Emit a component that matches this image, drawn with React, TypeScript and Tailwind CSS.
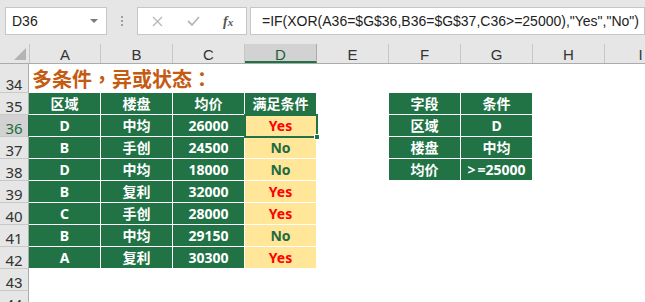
import React from "react";

const COLS = ["A", "B", "C", "D", "E", "F", "G", "H", "I"];

type Row = { region: string; building: string; price: string; ok: boolean };

const rows: Row[] = [
  { region: "D", building: "中均", price: "26000", ok: true },
  { region: "B", building: "手创", price: "24500", ok: false },
  { region: "D", building: "中均", price: "18000", ok: false },
  { region: "B", building: "复利", price: "32000", ok: true },
  { region: "C", building: "手创", price: "28000", ok: true },
  { region: "B", building: "中均", price: "29150", ok: false },
  { region: "A", building: "复利", price: "30300", ok: true },
];

// F35:G38 lookup table
const criteria: string[][] = [
  ["字段", "条件"],
  ["区域", "D"],
  ["楼盘", "中均"],
  ["均价", ">=25000"],
];

const cellFont = { fontFamily: '"Noto Sans", "Noto Sans CJK SC", sans-serif' };

function RowHeader({ n, tall, active }: { n: number; tall?: boolean; active?: boolean }) {
  return (
    <div
      className={`w-[29px] shrink-0 flex items-end justify-center border-b border-r text-[15px] leading-[13px] ${
        tall ? "h-[29px]" : "h-[22px]"
      } ${active ? "bg-[#d2d2d2] text-[#1d6a40] border-r-[#217346] border-b-[#c8c8c8]" : "bg-[#e6e6e6] text-[#333] border-b-[#c8c8c8] border-r-[#ababab]"}`}
    >
      <span className="pb-[1px]">{n}</span>
    </div>
  );
}

function Green({ children, head }: { children?: React.ReactNode; head?: boolean }) {
  return (
    <div
      className={`w-[72px] h-[22px] shrink-0 flex items-center justify-center bg-[#217346] text-white text-[14px] border-r border-b border-white ${
        head ? "font-semibold" : "font-bold"
      }`}
    >
      {children}
    </div>
  );
}

function Blank() {
  return <div className="w-[72px] h-[22px] shrink-0" />;
}

export default function App() {
  return (
    <div
      className="w-[645px] h-[302px] overflow-hidden bg-white relative"
      style={{ fontFamily: '"Liberation Sans", Arial, sans-serif' }}
    >
      {/* formula bar */}
      <div className="h-[44px] bg-[#e6e6e6] flex items-start pt-[7px]">
        <div className="ml-[5px] w-[102px] h-[28px] bg-white border border-[#c6c6c6] flex items-center justify-between pl-[6px] pr-[8px] text-[14px] text-[#222]">
          <span>D36</span>
          <svg width="8" height="5" viewBox="0 0 8 5">
            <path d="M0 0 L8 0 L4 4 Z" fill="#7a7a7a" />
          </svg>
        </div>
        <div className="w-[30px] h-[28px] flex flex-col items-center justify-center gap-[2px]">
          <span className="w-[2px] h-[2px] bg-[#a0a0a0]" />
          <span className="w-[2px] h-[2px] bg-[#a0a0a0]" />
          <span className="w-[2px] h-[2px] bg-[#a0a0a0]" />
        </div>
        <div className="w-[110px] h-[28px] bg-white border border-[#c6c6c6] flex items-center">
          <svg className="ml-[14px]" width="11" height="11" viewBox="0 0 11 11">
            <path d="M1 1 L10 10 M10 1 L1 10" stroke="#b8b8b8" strokeWidth="1.4" />
          </svg>
          <svg className="ml-[24px]" width="13" height="10" viewBox="0 0 13 10">
            <path d="M1 5 L5 9 L12 1" stroke="#b8b8b8" strokeWidth="1.8" fill="none" />
          </svg>
          <span
            className="ml-[23px] text-[14px] italic text-[#555] font-semibold"
            style={{ fontFamily: '"Liberation Serif", serif' }}
          >
            f<span className="text-[11px]">x</span>
          </span>
        </div>
        <div className="ml-[3px] flex-1 h-[28px] bg-white border border-[#c6c6c6] flex items-center pl-[11px] text-[14px] text-[#222] whitespace-nowrap overflow-hidden">
          =IF(XOR(A36=$G$36,B36=$G$37,C36&gt;=25000),"Yes","No")
        </div>
      </div>

      {/* column headers */}
      <div className="flex h-[20px] bg-[#e6e6e6] border-b border-[#ababab]">
        <div className="w-[29px] shrink-0 relative">
          <svg className="absolute left-[14px] top-[4px]" width="12" height="12" viewBox="0 0 12 12">
            <path d="M12 0 L12 12 L0 12 Z" fill="#b4b4b4" />
          </svg>
        </div>
        {COLS.map((c) => (
          <div
            key={c}
            className={`w-[72px] shrink-0 flex justify-center pt-[3px] text-[15px] leading-[15px] overflow-hidden border-r ${
              c === "D"
                ? "bg-[#d2d2d2] border-[#ababab] border-b-2 border-b-[#217346] text-[#1d5c3a]"
                : "border-[#c6c6c6] text-[#333]"
            } ${c === "A" ? "border-l border-l-[#c6c6c6]" : ""}`}
          >
            {c}
          </div>
        ))}
      </div>

      {/* row 34: title */}
      <div className="flex">
        <RowHeader n={34} tall />
        <div
          className="pl-[3px] text-[20px] leading-[29px] font-bold text-[#c55a11] whitespace-nowrap"
          style={{ fontFamily: '"Noto Sans CJK TC", "Noto Sans CJK SC", sans-serif' }}
        >
          多条件，异或状态：
        </div>
      </div>

      {/* row 35: headers */}
      <div className="flex" style={cellFont}>
        <RowHeader n={35} />
        <Green head>区域</Green>
        <Green head>楼盘</Green>
        <Green head>均价</Green>
        <Green head>满足条件</Green>
        <Blank />
        <Green>{criteria[0][0]}</Green>
        <Green>{criteria[0][1]}</Green>
      </div>

      {rows.map((r, i) => {
        const n = 36 + i;
        const crit = criteria[i + 1];
        return (
          <div key={n} className="flex" style={cellFont}>
            <RowHeader n={n} active={n === 36} />
            <Green>{r.region}</Green>
            <Green>{r.building}</Green>
            <Green>{r.price}</Green>
            <div
              className={`w-[72px] h-[22px] shrink-0 flex items-center justify-center bg-[#ffe699] text-[14px] font-bold border-r border-b border-white ${
                r.ok ? "text-[#ff0000]" : "text-[#1e6b42]"
              }`}
            >
              {r.ok ? "Yes" : "No"}
            </div>
            <Blank />
            {crit ? (
              <>
                <Green>{crit[0]}</Green>
                <Green>
                  {crit[1] === ">=25000" ? (
                    <span>
                      &gt;<span className="ml-[2px]">=25000</span>
                    </span>
                  ) : (
                    crit[1]
                  )}
                </Green>
              </>
            ) : null}
          </div>
        );
      })}

      <div className="flex">
        <RowHeader n={43} />
      </div>
      <div className="flex">
        <RowHeader n={44} />
      </div>

      {/* selection on D36 with fill handle */}
      <div className="absolute left-[244px] top-[114px] w-[74px] h-[24px] border-2 border-[#217346] pointer-events-none">
        <div className="absolute -right-[4px] -bottom-[4px] w-[6px] h-[6px] bg-[#217346] border border-white" />
      </div>
    </div>
  );
}
